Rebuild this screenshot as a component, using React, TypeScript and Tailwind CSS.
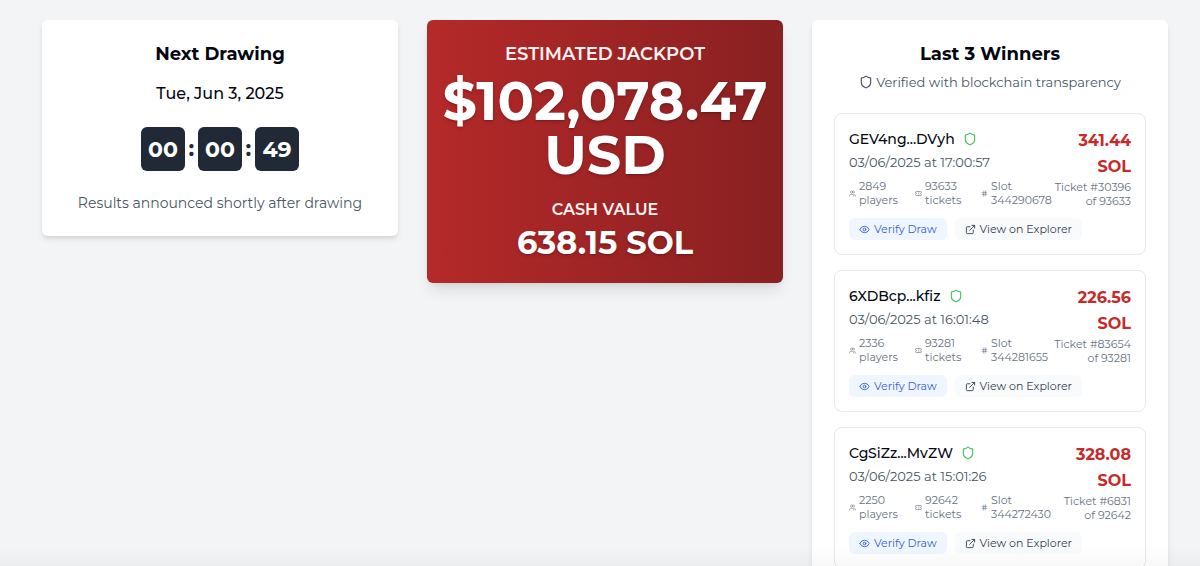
import { ExternalLink, Eye, Hash, Shield, Ticket, Users } from "lucide-react";

type Winner = {
  address: string;
  date: string;
  amount: string;
  players: number;
  tickets: number;
  slot: number;
  ticket: number;
};

const winners: Winner[] = [
  {
    address: "GEV4ng...DVyh",
    date: "03/06/2025 at 17:00:57",
    amount: "341.44",
    players: 2849,
    tickets: 93633,
    slot: 344290678,
    ticket: 30396,
  },
  {
    address: "6XDBcp...kfiz",
    date: "03/06/2025 at 16:01:48",
    amount: "226.56",
    players: 2336,
    tickets: 93281,
    slot: 344281655,
    ticket: 83654,
  },
  {
    address: "CgSiZz...MvZW",
    date: "03/06/2025 at 15:01:26",
    amount: "328.08",
    players: 2250,
    tickets: 92642,
    slot: 344272430,
    ticket: 6831,
  },
];

function TimeBox({ value }: { value: string }) {
  return (
    <span className="flex size-11 items-center justify-center rounded-md bg-[#212936] text-[22px] font-bold text-white">
      {value}
    </span>
  );
}

function NextDrawing() {
  return (
    <section className="rounded-md bg-white p-[22px] text-center shadow-md">
      <h2 className="text-[18px] leading-[25px] font-bold">Next Drawing</h2>
      <p className="mt-3.5 text-[16px] leading-[25px] font-medium">Tue, Jun 3, 2025</p>
      <div className="mt-[21px] flex items-center justify-center">
        <TimeBox value="00" />
        <span className="w-[13px] text-[22px] leading-7 font-bold text-[#212936]">:</span>
        <TimeBox value="00" />
        <span className="w-[13px] text-[22px] leading-7 font-bold text-[#212936]">:</span>
        <TimeBox value="49" />
      </div>
      <p className="mt-[21px] text-[14px] leading-[22px] text-gray-600">
        Results announced shortly after drawing
      </p>
    </section>
  );
}

function Jackpot() {
  return (
    <section className="rounded-md bg-linear-to-r from-[#b52929] to-[#892021] px-3.5 py-[22px] text-center text-white shadow-lg">
      <h2 className="text-[18px] leading-[25px] font-semibold text-red-50">ESTIMATED JACKPOT</h2>
      <p className="mt-[7px] text-[54px] leading-[54px] font-bold text-shadow-md">
        $102,078.47 USD
      </p>
      <h3 className="mt-[15px] text-[16px] leading-[25px] font-semibold text-red-50">CASH VALUE</h3>
      <p className="mt-[3px] text-[32px] leading-9 font-bold text-shadow-md">638.15 SOL</p>
    </section>
  );
}

function WinnerCard({ winner }: { winner: Winner }) {
  return (
    <li className="rounded-lg border border-gray-200 p-3.5">
      <div className="flex items-start justify-between">
        <div>
          <div className="flex items-center gap-2">
            <span className="text-[14px] leading-[22px] font-medium">{winner.address}</span>
            <Shield className="size-3.5 text-[#4cc15f]" />
          </div>
          <p className="mt-[3px] text-[13px] leading-[18px] text-gray-600">{winner.date}</p>
          <div className="mt-2 flex gap-3.5 text-[11px] leading-3.5 text-gray-500">
            <span className="flex w-[52px] items-center gap-[3px]">
              <Users className="size-[7px] shrink-0" />
              <span>
                {winner.players}
                <br />
                players
              </span>
            </span>
            <span className="flex w-[52px] items-center gap-[3px]">
              <Ticket className="size-[7px] shrink-0" />
              <span>
                {winner.tickets}
                <br />
                tickets
              </span>
            </span>
            <span className="flex items-center gap-[3px]">
              <Hash className="size-[7px] shrink-0" />
              <span>
                Slot
                <br />
                {winner.slot}
              </span>
            </span>
          </div>
        </div>
        <div className="text-right">
          <p className="text-[16px] leading-[26px] font-bold text-[#c42b2b]">
            {winner.amount}
            <br />
            SOL
          </p>
          <p className="text-[11px] leading-3.5 whitespace-nowrap text-gray-500">
            Ticket #{winner.ticket}
            <br />
            of {winner.tickets}
          </p>
        </div>
      </div>
      <div className="mt-2.5 flex gap-2 text-[11px] leading-3.5">
        <button className="flex items-center gap-1 rounded-md bg-[#eff6ff] px-2.5 py-1 text-[#3a5fd3]">
          <Eye className="size-[11px]" />
          Verify Draw
        </button>
        <a
          href="#explorer"
          className="flex items-center gap-1 rounded-md bg-gray-50 px-2.5 py-1 text-gray-700"
        >
          <ExternalLink className="size-[11px]" />
          View on Explorer
        </a>
      </div>
    </li>
  );
}

function Winners() {
  return (
    <section className="rounded-md bg-white p-[22px] shadow-md">
      <h2 className="text-center text-[18px] leading-[25px] font-bold">Last 3 Winners</h2>
      <p className="mt-1.5 flex items-center justify-center gap-[3px] text-[13px] leading-[18px] text-gray-600">
        <Shield className="size-3.5" />
        Verified with blockchain transparency
      </p>
      <ul className="mt-[22px] flex flex-col gap-[15px]">
        {winners.map((winner) => (
          <WinnerCard key={winner.address} winner={winner} />
        ))}
      </ul>
    </section>
  );
}

export default function App() {
  return (
    <main className="relative h-screen overflow-hidden bg-[#f2f4f6] pt-5 pr-8 pl-[42px] font-[Montserrat,Inter,sans-serif] text-gray-950">
      <div className="grid grid-cols-3 items-start gap-[29px]">
        <NextDrawing />
        <Jackpot />
        <Winners />
      </div>
      <div className="pointer-events-none absolute inset-x-0 bottom-0 h-5 bg-linear-to-b from-transparent to-black/3" />
    </main>
  );
}
